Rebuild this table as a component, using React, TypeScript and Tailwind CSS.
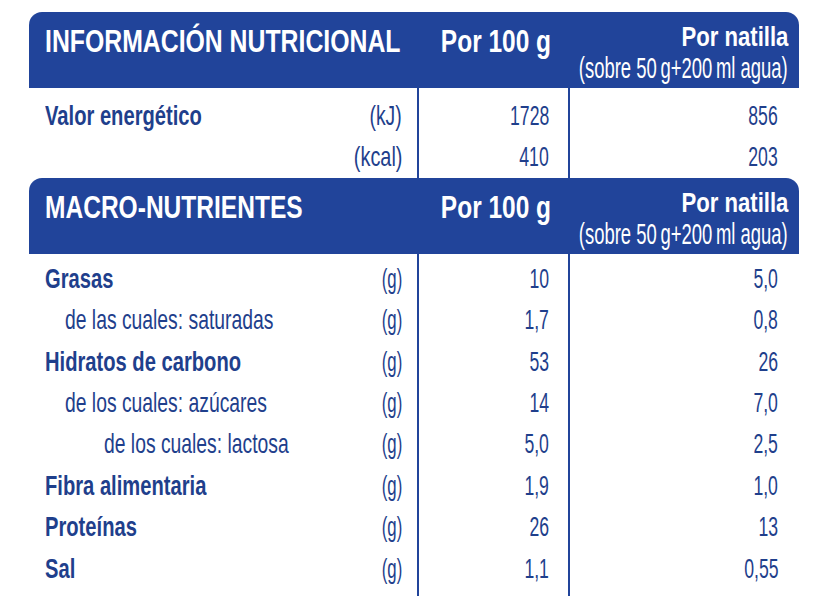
import React from "react";

const HEAD = "bg-[#21449a]";
const TXT = "text-[#1f3f8c]";

function S({ children, right, sc, className = "" }: { children: React.ReactNode; right?: boolean; sc: string; className?: string }) {
  return (
    <span className={`inline-block shrink-0 whitespace-nowrap ${right ? "origin-right" : "origin-left"} ${sc} ${className}`}>
      {children}
    </span>
  );
}

function Header({ title, tsc }: { title: string; tsc: string }) {
  return (
    <div className={`${HEAD} h-[76px] rounded-t-[13px] flex text-white`}>
      <div className="w-[388px] min-w-0 shrink-0 flex pl-[16px] pt-[9px] text-[32px] font-bold leading-[40px]">
        <S sc={tsc}>{title}</S>
      </div>
      <div className="w-[151px] min-w-0 shrink-0 flex justify-end items-start pr-[17px] pt-[9px] text-[32px] font-bold leading-[40px]">
        <S right sc="scale-x-[0.765]">Por 100 g</S>
      </div>
      <div className="w-[231px] min-w-0 shrink-0 flex flex-col items-end pr-[11px] pt-[10px]">
        <div className="text-[28px] font-bold leading-[30px] flex justify-end">
          <S right sc="scale-x-[0.79]">Por natilla</S>
        </div>
        <div className="text-[30px] font-normal leading-[28px] mt-[2px] flex justify-end">
          <S right sc="scale-x-[0.615]">(sobre 50&#8201;g+200&#8201;ml agua)</S>
        </div>
      </div>
    </div>
  );
}

type Row = { label: string; bold?: boolean; indent?: number; unit: string; a: string; b: string };

function unitScale(u: string) {
  if (u === "(kJ)") return "scale-x-[0.69]";
  if (u === "(kcal)") return "scale-x-[0.71]";
  return "scale-x-[0.6]";
}

function Body({ rows, pt }: { rows: Row[]; pt: string }) {
  return (
    <div className={`flex ${TXT} text-[28px]`}>
      <div className={`w-[388px] shrink-0 ${pt}`}>
        {rows.map((r, i) => (
          <div key={i} className="h-[41.4px] leading-[41.4px] flex pr-[15px]">
            <span
              className={`flex flex-1 min-w-0 ${r.indent === 2 ? "pl-[75px]" : r.indent === 1 ? "pl-[36px]" : "pl-[16px]"}`}
            >
              <S sc={r.bold ? "scale-x-[0.72]" : "scale-x-[0.69]"} className={r.bold ? "font-bold" : "font-normal"}>
                {r.label}
              </S>
            </span>
            <span className="flex justify-end shrink-0">
              <S right sc={unitScale(r.unit)}>{r.unit}</S>
            </span>
          </div>
        ))}
      </div>
      <div className={`w-[151px] shrink-0 border-l-2 border-[#21449a] ${pt}`}>
        {rows.map((r, i) => (
          <div key={i} className="h-[41.4px] leading-[41.4px] flex justify-end pr-[19px]">
            <S right sc="scale-x-[0.63]">{r.a}</S>
          </div>
        ))}
      </div>
      <div className={`w-[231px] shrink-0 border-l-2 border-[#21449a] ${pt}`}>
        {rows.map((r, i) => (
          <div key={i} className="h-[41.4px] leading-[41.4px] flex justify-end pr-[21px]">
            <S right sc="scale-x-[0.63]">{r.b}</S>
          </div>
        ))}
      </div>
    </div>
  );
}

export default function App() {
  const energy: Row[] = [
    { label: "Valor energético", bold: true, unit: "(kJ)", a: "1728", b: "856" },
    { label: "", unit: "(kcal)", a: "410", b: "203" },
  ];
  const macro: Row[] = [
    { label: "Grasas", bold: true, unit: "(g)", a: "10", b: "5,0" },
    { label: "de las cuales: saturadas", indent: 1, unit: "(g)", a: "1,7", b: "0,8" },
    { label: "Hidratos de carbono", bold: true, unit: "(g)", a: "53", b: "26" },
    { label: "de los cuales: azúcares", indent: 1, unit: "(g)", a: "14", b: "7,0" },
    { label: "de los cuales: lactosa", indent: 2, unit: "(g)", a: "5,0", b: "2,5" },
    { label: "Fibra alimentaria", bold: true, unit: "(g)", a: "1,9", b: "1,0" },
    { label: "Proteínas", bold: true, unit: "(g)", a: "26", b: "13" },
    { label: "Sal", bold: true, unit: "(g)", a: "1,1", b: "0,55" },
  ];
  return (
    <div className="w-[831px] h-[596px] bg-white overflow-hidden pt-[12px] pl-[29px] font-['Liberation_Sans_Narrow','Liberation_Sans',sans-serif]">
      <div className="w-[770px]">
        <Header title="INFORMACIÓN NUTRICIONAL" tsc="scale-x-[0.775]" />
        <Body rows={energy} pt="pt-[7px]" />
        <Header title="MACRO-NUTRIENTES" tsc="scale-x-[0.767]" />
        <Body rows={macro} pt="pt-[4px] pb-[20px]" />
      </div>
    </div>
  );
}
